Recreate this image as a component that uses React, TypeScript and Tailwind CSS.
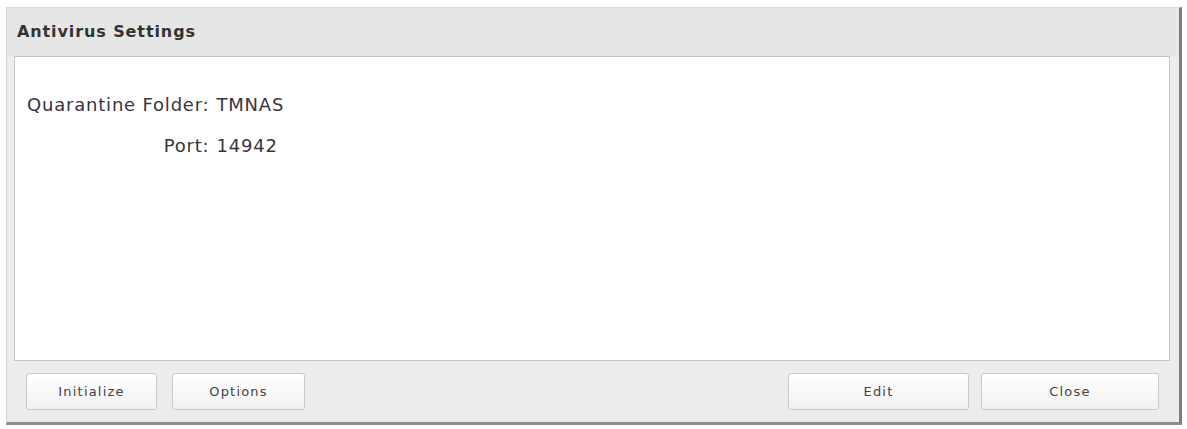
const fields = [
  { label: "Quarantine Folder:", value: "TMNAS" },
  { label: "Port:", value: "14942" },
];

const DialogButton = ({ label, width }: { label: string; width: string }) => (
  <button
    className={`${width} h-[37px] rounded-[3px] border border-[#c9c9c9] bg-gradient-to-b from-white to-[#f1f1f1] text-[13px] tracking-[1.2px] text-[#444] shadow-[inset_0_1px_0_#ffffff]`}
    style={{ fontFamily: '"DejaVu Sans", Verdana, sans-serif' }}
  >
    {label}
  </button>
);

export default function App() {
  return (
    <div className="w-[1187px] h-[429px] bg-white pl-[6px] pt-[7px]">
      <div className="w-[1176px] h-[418px] flex flex-col bg-[#ececec] border-l border-t border-l-[#d2d2d2] border-t-[#d6d6d6] border-r-[3px] border-b-[3px] border-r-[#7c7c7c] border-b-[#8c8c8c]">
        <div className="h-[48px] shrink-0 flex items-center pl-[10px] bg-[#e6e6e6]">
          <h1
            className="text-[16px] tracking-[0.9px] font-bold text-[#333]"
            style={{ fontFamily: '"DejaVu Sans", Tahoma, sans-serif' }}
          >
            Antivirus Settings
          </h1>
        </div>
        <div className="h-[305px] shrink-0 ml-[7px] mr-[9px] bg-white border border-[#c4c4c4] pl-[12px] pt-[36px]">
          <div
            className="grid grid-cols-[auto_auto] justify-start gap-x-[7px] gap-y-[17px] text-[18px] tracking-[0.8px] leading-[24px] text-[#3b3440]"
            style={{ fontFamily: '"DejaVu Sans", Tahoma, sans-serif' }}
          >
            {fields.map((f) => (
              <div key={f.label} className="contents">
                <span className="text-right">{f.label}</span>
                <span>{f.value}</span>
              </div>
            ))}
          </div>
        </div>
        <div className="flex items-center mt-[12px] pl-[19px] pr-[20px]">
          <div className="flex gap-[15px]">
            <DialogButton label="Initialize" width="w-[131px]" />
            <DialogButton label="Options" width="w-[133px]" />
          </div>
          <div className="ml-auto flex gap-[12px]">
            <DialogButton label="Edit" width="w-[181px]" />
            <DialogButton label="Close" width="w-[178px]" />
          </div>
        </div>
      </div>
    </div>
  );
}
